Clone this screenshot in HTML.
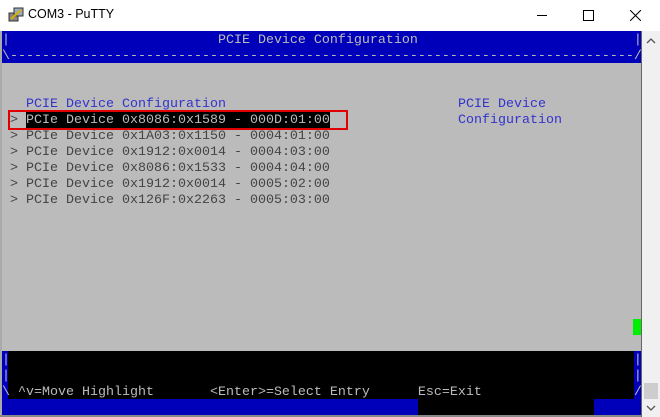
<!DOCTYPE html>
<html><head><style>
*{margin:0;padding:0}
body{width:660px;height:417px;overflow:hidden;background:#fff;position:relative;font-family:"Liberation Sans",sans-serif}
.t{position:absolute;font-family:"Liberation Mono",monospace;font-size:13.33px;line-height:16px;white-space:pre;height:16px;padding-top:2px}
.b{position:absolute}
</style></head><body>
<div class="b" style="left:0;top:0;width:660px;height:31px;background:#fff"></div>
<svg class="b" style="left:8px;top:7px" width="16" height="16" viewBox="0 0 16 16"><rect x="1" y="6" width="9" height="8" fill="#888" stroke="#333"/><rect x="6" y="1" width="9" height="8" fill="#9ab" stroke="#333"/><path d="M3 12l10-9" stroke="#d8b000" stroke-width="2"/></svg>
<div class="b" style="left:28px;top:7px;font-size:12.5px;color:#000">COM3 - PuTTY</div>
<div class="b" style="left:537px;top:15px;width:10px;height:1px;background:#000"></div>
<div class="b" style="left:583px;top:10px;width:9px;height:9px;border:1px solid #000"></div>
<svg class="b" style="left:630px;top:10px" width="11" height="11"><path d="M0 0L11 11M11 0L0 11" stroke="#000" stroke-width="1"/></svg>
<div class="b" style="left:0;top:31px;width:642px;height:386px;background:#bbb"></div>
<div class="b" style="left:0;top:31px;width:2px;height:386px;background:#aaa"></div>
<div class="b" style="left:2px;top:31px;width:640px;height:32px;background:#0000bb"></div>
<div class="t" style="left:2px;top:31px;color:#bbb">|                          PCIE Device Configuration                           |</div>
<div class="t" style="left:2px;top:47px;color:#bbb">\------------------------------------------------------------------------------/</div>
<div class="t" style="left:26px;top:95px;color:#3333cc">PCIE Device Configuration</div>
<div class="t" style="left:458px;top:95px;color:#3333cc">PCIE Device</div>
<div class="t" style="left:458px;top:111px;color:#3333cc">Configuration</div>
<div class="b" style="left:26px;top:111px;width:304px;height:17px;background:#000"></div>
<div class="t" style="left:10px;top:111px;color:#444">&gt; <span style="color:#bbb">PCIe Device 0x8086:0x1589 - 000D:01:00</span></div>
<div class="t" style="left:10px;top:127px;color:#444">&gt; PCIe Device 0x1A03:0x1150 - 0004:01:00</div>
<div class="t" style="left:10px;top:143px;color:#444">&gt; PCIe Device 0x1912:0x0014 - 0004:03:00</div>
<div class="t" style="left:10px;top:159px;color:#444">&gt; PCIe Device 0x8086:0x1533 - 0004:04:00</div>
<div class="t" style="left:10px;top:175px;color:#444">&gt; PCIe Device 0x1912:0x0014 - 0005:02:00</div>
<div class="t" style="left:10px;top:191px;color:#444">&gt; PCIe Device 0x126F:0x2263 - 0005:03:00</div>
<div class="b" style="left:8px;top:110px;width:336px;height:16px;border:2px solid #e00000"></div>
<div class="b" style="left:633px;top:319px;width:8px;height:16px;background:#00ee00"></div>
<div class="b" style="left:2px;top:351px;width:640px;height:48px;background:#000"></div>
<div class="b" style="left:2px;top:351px;width:6px;height:48px;background:#0000bb"></div>
<div class="b" style="left:634px;top:351px;width:8px;height:48px;background:#0000bb"></div>
<div class="t" style="left:2px;top:351px;color:#bbb">|                                                                              |</div>
<div class="t" style="left:2px;top:367px;color:#bbb">|                                                                              |</div>
<div class="t" style="left:2px;top:383px;color:#bbb">\ ^v=Move Highlight       &lt;Enter&gt;=Select Entry      Esc=Exit                   /</div>
<div class="b" style="left:2px;top:399px;width:416px;height:16px;background:#0000bb"></div>
<div class="b" style="left:418px;top:399px;width:176px;height:16px;background:#000"></div>
<div class="b" style="left:594px;top:399px;width:48px;height:16px;background:#0000bb"></div>
<div class="b" style="left:0;top:415px;width:642px;height:2px;background:#888"></div>
<div class="b" style="left:641px;top:31px;width:1px;height:386px;background:#666"></div>
<div class="b" style="left:642px;top:31px;width:18px;height:386px;background:#f0f0f0"></div>
<svg class="b" style="left:645px;top:36px" width="12" height="10"><path d="M2 7L6 3L10 7" stroke="#555" fill="none" stroke-width="1.3"/></svg>
<div class="b" style="left:644px;top:383px;width:14px;height:16px;background:#cdcdcd"></div>
<svg class="b" style="left:645px;top:403px" width="12" height="10"><path d="M2 3L6 7L10 3" stroke="#555" fill="none" stroke-width="1.3"/></svg>
</body></html>
